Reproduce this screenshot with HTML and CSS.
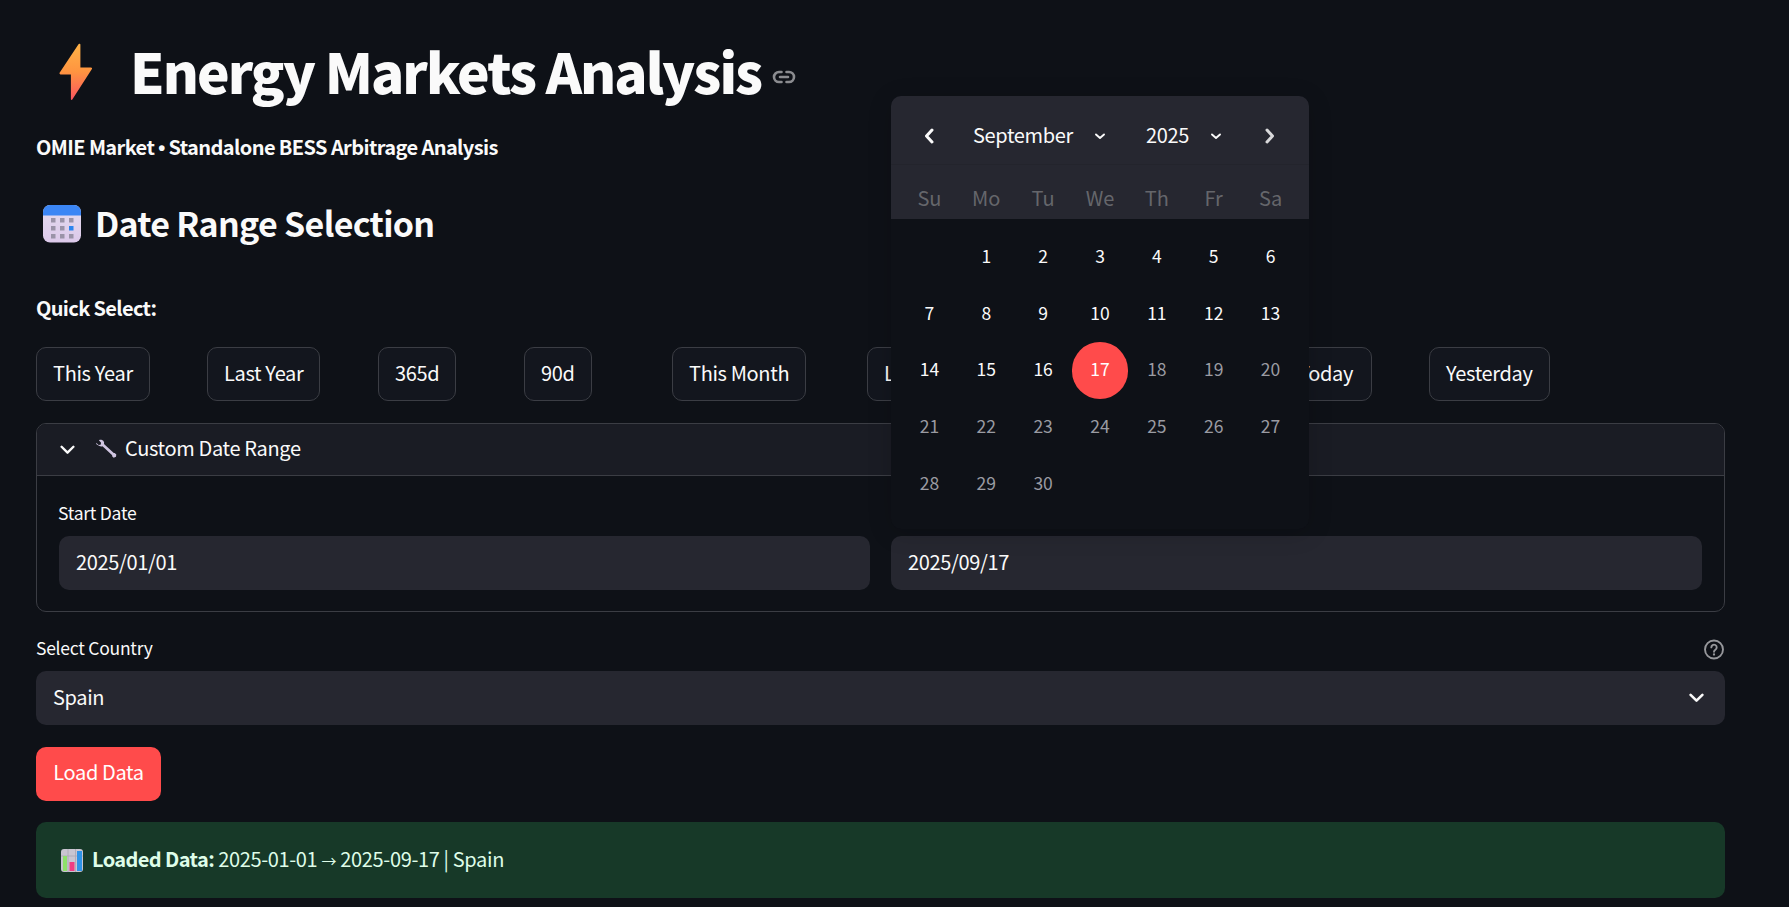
FILE: index.html
```html
<!DOCTYPE html>
<html lang="en">
<head>
<meta charset="utf-8">
<title>Energy Markets Analysis</title>
<link rel="stylesheet" href="styles.css">
</head>
<body>
<main class="main">
  <header class="title-row">
    <svg class="bolt" viewBox="0 0 34 58" aria-hidden="true">
      <defs><linearGradient id="boltg" x1="0.5" y1="0" x2="0.5" y2="1"><stop offset="0" stop-color="#ffb347"/><stop offset="0.5" stop-color="#ff9440"/><stop offset="1" stop-color="#fa5560"/></linearGradient></defs>
      <path d="M19.5 1.2c.4-.9 1.9-.6 1.9.4V24.5H32c.8 0 1.3.9.9 1.6L13.3 56.6c-.4.7-1.4.4-1.4-.4V31.500H1.600c-.9 0-1.400-1-1-1.700Z" fill="url(#boltg)"/>
    </svg>
    <h1 class="title">Energy Markets Analysis</h1>
    <svg class="link-icon" viewBox="0 0 24 24" aria-hidden="true"><path d="M9.500 7H7a5 5 0 0 0 0 10h2.500M14.500 7H17a5 5 0 0 1 0 10h-2.500M8 12h8" fill="none" stroke="#8b8c90" stroke-width="2.600" stroke-linecap="round"/></svg>
  </header>
  <p class="subtitle">OMIE Market <span class="bullet">•</span> Standalone BESS Arbitrage Analysis</p>
  <div class="section-head">
    <svg class="cal-icon" viewBox="0 0 38 38" aria-hidden="true">
      <defs><linearGradient id="calb" x1="0" y1="0" x2="0" y2="1"><stop offset="0" stop-color="#e4dcef"/><stop offset="1" stop-color="#dcc9ea"/></linearGradient></defs>
      <rect width="38" height="37.500" rx="7" fill="url(#calb)"/>
      <path d="M7 0h24a7 7 0 0 1 7 7v3.500H0V7a7 7 0 0 1 7-7Z" fill="#3b86f5"/>
      <g fill="#9a93a8">
        <rect x="8" y="13" width="4.500" height="4.500"/><rect x="17" y="13" width="4.500" height="4.500"/><rect x="26" y="13" width="4.500" height="4.500"/>
        <rect x="8" y="21" width="4.500" height="4.500"/><rect x="17" y="21" width="4.500" height="4.500"/><rect x="26" y="21" width="4.500" height="4.500" fill="#2b84ee"/>
        <rect x="8" y="29" width="4.500" height="4.500"/><rect x="17" y="29" width="4.500" height="4.500"/><rect x="26" y="29" width="4.500" height="4.500"/>
      </g>
    </svg>
    <h2 class="section-title">Date Range Selection</h2>
  </div>
  <p class="quick-label">Quick Select:</p>
  <div class="quick-row">
    <div><button class="btn" type="button">This Year</button></div>
    <div><button class="btn" type="button">Last Year</button></div>
    <div><button class="btn" type="button">365d</button></div>
    <div><button class="btn" type="button">90d</button></div>
    <div><button class="btn" type="button">This Month</button></div>
    <div><button class="btn" type="button">Last Month</button></div>
    <div class="today-cell"><button class="btn" type="button">Today</button></div>
    <div><button class="btn" type="button">Yesterday</button></div>
  </div>
  <section class="expander">
    <div class="exp-head">
      <svg class="chev-exp" viewBox="0 0 14 9" aria-hidden="true"><path d="M1.500 1.500 7 7l5.500-5.500" fill="none" stroke="#fafafa" stroke-width="2.200" stroke-linecap="round" stroke-linejoin="round"/></svg>
      <svg class="wrench" viewBox="0 0 22 21" aria-hidden="true"><path d="M1.200 4.800 3.600 7l2-.3.500-2L3.900 2.300c1.700-.9 3.700-.4 4.700 1 .6.900.7 1.900.4 2.800l9.800 9 .9-.2 1.600 1.500-.3 2.300-2.300 1.100-1.600-1.500.1-1-9.700-9c-1.100.4-2.500.200-3.500-.6C1.900 7.100 1 6 1.200 4.800Z" fill="#cfc4e0"/></svg>
      <span class="exp-text">Custom Date Range</span>
    </div>
    <div class="exp-body">
      <div class="field">
        <label class="label">Start Date</label>
        <div class="input">2025/01/01</div>
      </div>
      <div class="field">
        <label class="label">End Date</label>
        <div class="input">2025/09/17</div>
      </div>
    </div>
  </section>
  <div class="country">
    <div class="country-label">
      <label class="label">Select Country</label>
      <svg class="help" viewBox="0 0 20 20" aria-hidden="true"><circle cx="10" cy="10" r="9" fill="none" stroke="#96979b" stroke-width="1.900"/><path d="M7.300 7.900a2.700 2.700 0 1 1 4.100 2.300c-.9.600-1.400 1-1.400 2" fill="none" stroke="#96979b" stroke-width="1.900" stroke-linecap="round"/><circle cx="10" cy="15" r="1.150" fill="#96979b"/></svg>
    </div>
    <div class="select">
      <span class="select-text">Spain</span>
      <svg class="chev-sel" viewBox="0 0 14 9" aria-hidden="true"><path d="M1.500 1.500 7 7l5.500-5.500" fill="none" stroke="#fafafa" stroke-width="2.400" stroke-linecap="round" stroke-linejoin="round"/></svg>
    </div>
  </div>
  <button class="btn-primary" type="button">Load Data</button>
  <div class="alert">
    <svg class="chart" viewBox="0 0 22 23" aria-hidden="true">
      <rect width="22" height="23" rx="3" fill="#c9c5d1"/>
      <path d="M0 7h22M7 0v23M14.500 0v23" stroke="#aaa6b3" stroke-width=".8"/>
      <rect x="2" y="7" width="4" height="15" fill="#8ee06a"/>
      <rect x="8.500" y="13" width="5" height="9" fill="#ef3d82"/>
      <rect x="16" y="2" width="5" height="20" fill="#2f93e8"/>
    </svg>
    <span class="alert-text"><strong>Loaded Data:</strong> 2025-01-01 <span class="arrow">→</span> 2025-09-17 | Spain</span>
  </div>
</main>
<div class="calendar">
  <div class="cal-nav">
    <svg class="cal-arrow" viewBox="0 0 10 16" aria-hidden="true"><path d="M8 2 2.500 8 8 14" fill="none" stroke="#fafafa" stroke-width="3" stroke-linecap="round" stroke-linejoin="round"/></svg>
    <div class="cal-sel cal-month"><span>September</span><svg class="cal-chev" viewBox="0 0 10 7" aria-hidden="true"><path d="M1 1.500 5 5l4-3.500" fill="none" stroke="#fafafa" stroke-width="1.900" stroke-linecap="round" stroke-linejoin="round"/></svg></div>
    <div class="cal-sel cal-year"><span>2025</span><svg class="cal-chev" viewBox="0 0 10 7" aria-hidden="true"><path d="M1 1.500 5 5l4-3.500" fill="none" stroke="#fafafa" stroke-width="1.900" stroke-linecap="round" stroke-linejoin="round"/></svg></div>
    <svg class="cal-arrow" viewBox="0 0 10 16" aria-hidden="true"><path d="M2 2l5.500 6L2 14" fill="none" stroke="#d8d8da" stroke-width="3" stroke-linecap="round" stroke-linejoin="round"/></svg>
  </div>
  <div class="cal-week">
    <span>Su</span><span>Mo</span><span>Tu</span><span>We</span><span>Th</span><span>Fr</span><span>Sa</span>
  </div>
  <div class="cal-days">
    <span></span><span>1</span><span>2</span><span>3</span><span>4</span><span>5</span><span>6</span>
    <span>7</span><span>8</span><span>9</span><span>10</span><span>11</span><span>12</span><span>13</span>
    <span>14</span><span>15</span><span>16</span><span class="sel">17</span><span class="off">18</span><span class="off">19</span><span class="off">20</span>
    <span class="off">21</span><span class="off">22</span><span class="off">23</span><span class="off">24</span><span class="off">25</span><span class="off">26</span><span class="off">27</span>
    <span class="off">28</span><span class="off">29</span><span class="off">30</span><span></span><span></span><span></span><span></span>
  </div>
</div>
</body>
</html>
```
FILE: styles.css
```css
* { box-sizing: border-box; }
html, body { margin: 0; height: 100%; overflow: hidden; background: #0e1117; }
body { color: #fafafa; font-family: "Noto Sans CJK SC", "Noto Sans", sans-serif; font-size: 20px; line-height: 32px; letter-spacing: -0.35px; position: relative; }
.main { padding: 36px 64px 0 36px; }
.title-row { display: flex; align-items: center; height: 72px; }
.bolt { width: 34px; height: 58px; margin-left: 23px; flex: none; }
.title { margin: -4px 0 0 37px; font-size: 55px; font-weight: 800; line-height: 72px; letter-spacing: -1.95px; }
.link-icon { width: 24px; height: 24px; margin: 10px 0 0 11px; flex: none; }
.subtitle { margin: 23px 0 0; font-weight: 700; height: 32px; letter-spacing: -0.6px; }
.bullet { font-family: "Liberation Sans", sans-serif; }
.section-head { display: flex; align-items: center; height: 50px; margin-top: 36px; }
.cal-icon { width: 38px; height: 38px; margin-left: 7px; flex: none; }
.section-title { margin: -2px 0 0 14px; font-size: 34px; font-weight: 600; line-height: 50px; letter-spacing: -0.7px; }
.quick-label { margin: 43px 0 0; font-weight: 700; height: 32px; letter-spacing: -0.65px; }
.quick-row { display: grid; grid-template-columns: 171px 171px 146px 148px 195px 412px 150px 1fr; margin-top: 23px; }
.today-cell { display: flex; justify-content: flex-end; padding-right: 57px; }
.today-cell .btn { padding-right: 18px; }
.btn { height: 54px; padding: 0 16px 2px; background: #13161e; border: 1.250px solid #3b3d44; border-radius: 10px; color: #fafafa; font: inherit; letter-spacing: inherit; white-space: nowrap; }
.expander { margin-top: 22px; height: 189px; border: 1.250px solid #3b3d44; border-radius: 10px; overflow: hidden; }
.exp-head { display: flex; align-items: center; height: 52px; background: #1a1c24; border-bottom: 1.250px solid #3b3d44; padding-left: 23px; }
.chev-exp { width: 15px; height: 10px; flex: none; }
.wrench { width: 22px; height: 21px; margin: -2px 0 0 20px; flex: none; }
.exp-text { margin: -4px 0 0 8px; }
.exp-body { display: grid; grid-template-columns: 1fr 1fr; column-gap: 21px; padding: 23px 22px 0; }
.label { display: block; font-size: 17.500px; line-height: 28px; height: 28px; letter-spacing: -0.25px; }
.field:first-child .label { margin-left: -1px; }
.field .input { margin-top: 9px; }
.input { height: 54px; background: #262730; border-radius: 10px; padding: 0 17px 3px; display: flex; align-items: center; }
.country { margin-top: 22px; }
.country-label { display: flex; justify-content: space-between; align-items: center; height: 28px; }
.help { width: 20px; height: 21px; margin: 2px 1px 0 0; }
.select { display: flex; justify-content: space-between; align-items: center; height: 54px; margin-top: 9px; background: #262730; border-radius: 10px; padding: 0 21px 0 17px; }
.select-text { margin-top: -2px; }
.chev-sel { width: 15px; height: 10px; }
.btn-primary { display: block; height: 54px; width: 125px; margin-top: 22px; background: #ff4b4b; border: 0; border-radius: 10px; color: #fff; font: inherit; letter-spacing: inherit; padding: 0 0 5px; }
.alert { display: flex; align-items: center; height: 76px; margin-top: 21px; background: #173928; border-radius: 10px; padding-left: 25px; color: #dffde9; }
.chart { width: 22px; height: 23px; margin-right: 9px; flex: none; }
.alert strong { font-weight: 700; letter-spacing: -0.6px; }
.arrow { font-size: 15px; }

/* date picker popover sits above the form */
.calendar { position: absolute; left: 891px; top: 96px; width: 418px; height: 433px; background: #0e1117; border-radius: 10px; box-shadow: 0 4px 24px rgba(0, 0, 0, .16); overflow: hidden; }
.cal-nav { position: relative; height: 69px; background: #262730; border-bottom: 1px solid #23242c; display: flex; align-items: center; }
.cal-arrow { position: absolute; top: 32px; width: 10px; height: 16px; }
.cal-arrow:first-child { left: 33px; }
.cal-arrow:last-child { left: 374px; }
.cal-sel { position: absolute; top: 23px; display: flex; align-items: center; line-height: 32px; }
.cal-month { left: 82px; }
.cal-month .cal-chev { margin-left: 22px; }
.cal-year { left: 255px; }
.cal-year .cal-chev { margin-left: 22px; }
.cal-chev { width: 10px; height: 7px; margin-top: 2px; }
.cal-week { display: grid; grid-template-columns: repeat(7, 1fr); padding: 12px 10px 0; height: 54px; background: #262730; color: #65666b; align-items: center; text-align: center; letter-spacing: 0; }
.cal-days { display: grid; grid-template-columns: repeat(7, 1fr); grid-auto-rows: 56.600px; padding: 10px 10px 0; font-size: 17.500px; text-align: center; letter-spacing: 0; }
.cal-days span { display: flex; align-items: center; justify-content: center; padding-bottom: 2px; }
.cal-days .off { color: #9a9ba2; }
.cal-days .sel { background: #ff4b4b; border-radius: 50%; color: #fff; }
```
